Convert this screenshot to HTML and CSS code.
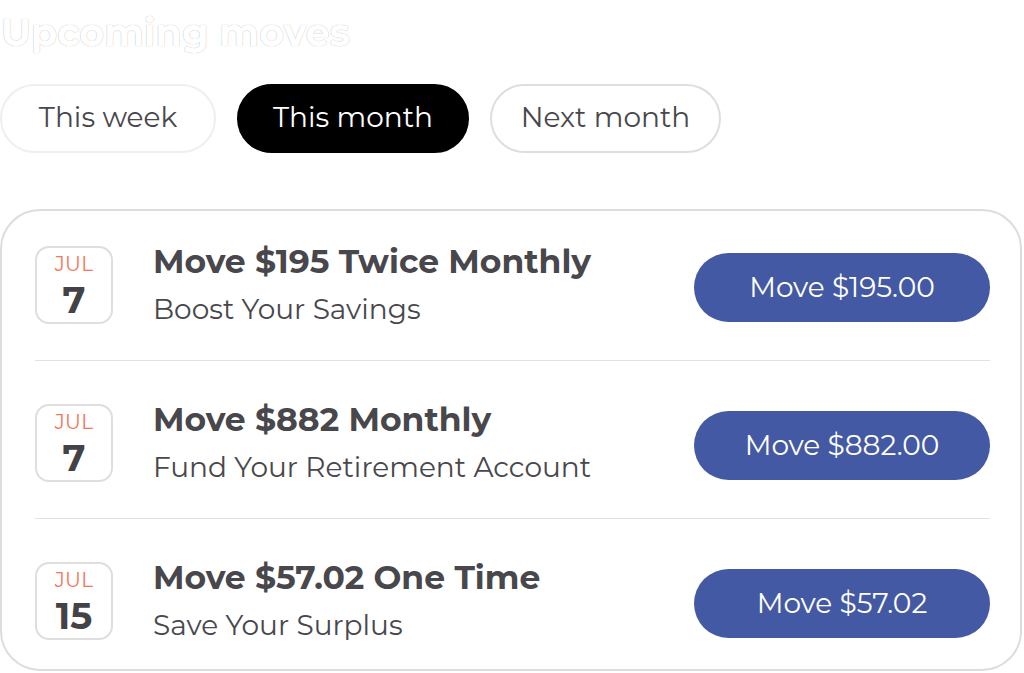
FILE: index.html
```html
<!DOCTYPE html>
<html>
<head>
<meta charset="utf-8">
<link rel="stylesheet" href="styles.css">
</head>
<body>
<div class="page">
  <h1 class="title">Upcoming moves</h1>
  <div class="tabs">
    <button class="tab tab-week">This week</button>
    <button class="tab tab-active">This month</button>
    <button class="tab tab-next">Next month</button>
  </div>
  <div class="card">
    <div class="row">
      <div class="date"><span class="month">JUL</span><span class="day">7</span></div>
      <div class="info">
        <div class="info-title">Move $195 Twice Monthly</div>
        <div class="info-sub">Boost Your Savings</div>
      </div>
      <button class="move">Move $195.00</button>
    </div>
    <div class="row">
      <div class="date"><span class="month">JUL</span><span class="day">7</span></div>
      <div class="info">
        <div class="info-title">Move $882 Monthly</div>
        <div class="info-sub">Fund Your Retirement Account</div>
      </div>
      <button class="move">Move $882.00</button>
    </div>
    <div class="row">
      <div class="date"><span class="month">JUL</span><span class="day">15</span></div>
      <div class="info">
        <div class="info-title">Move $57.02 One Time</div>
        <div class="info-sub">Save Your Surplus</div>
      </div>
      <button class="move">Move $57.02</button>
    </div>
  </div>
</div>
</body>
</html>
```
FILE: styles.css
```css
* { box-sizing: border-box; }
html, body {
  margin: 0;
  background: #ffffff;
}
body {
  font-family: Montserrat, "Open Sans", "Noto Sans", sans-serif;
  color: #48484c;
  width: 1024px;
  height: 673px;
  overflow: hidden;
}
.title {
  margin: 0;
  padding: 11px 0 0 1px;
  height: 84px;
  font-size: 38px;
  line-height: 44px;
  font-weight: 700;
  color: #ffffff;
  text-shadow: 0 0 1px rgba(0,0,0,0.35);
}
.tabs {
  display: flex;
  gap: 21px;
  height: 69px;
}
.tab {
  font-family: inherit;
  height: 69px;
  border-radius: 35px;
  border: 2px solid #e6e6e6;
  background: #ffffff;
  color: #48484c;
  font-size: 28px;
  padding: 0 0 4px;
  text-align: center;
}
.tab-week { width: 216px; border-color: #efefef; }
.tab-active {
  width: 232px;
  background: #000000;
  border-color: #000000;
  color: #ffffff;
}
.tab-next { width: 231px; border-color: #dedede; }
.card {
  margin-top: 56px;
  width: 1022px;
  border: 2px solid #dddddd;
  border-radius: 40px;
  padding: 0 30px 0 33px;
}
.row {
  display: flex;
  align-items: center;
  padding: 43px 0 36px;
  border-bottom: 1px solid #e2e2e2;
}
.row:first-child { padding-top: 35px; }
.row:last-child { border-bottom: none; padding-bottom: 29px; }
.date {
  width: 78px;
  height: 78px;
  border: 2px solid #dedede;
  border-radius: 14px;
  display: flex;
  flex-direction: column;
  align-items: center;
  justify-content: center;
  flex-shrink: 0;
  padding-top: 3px;
}
.month {
  font-size: 20px;
  line-height: 25px;
  color: #f4765d;
  letter-spacing: 0.3px;
}
.day {
  font-size: 37px;
  line-height: 45px;
  font-weight: 700;
  color: #434247;
}
.info {
  flex: 1;
  margin-left: 40px;
}
.info-title {
  font-size: 33px;
  line-height: 30px;
  font-weight: 700;
  color: #48474c;
}
.info-sub {
  margin-top: 18px;
  font-size: 28px;
  line-height: 30px;
  color: #48484c;
}
.move {
  font-family: inherit;
  width: 296px;
  height: 69px;
  margin-top: 4px;
  border: none;
  border-radius: 35px;
  background: #4459a3;
  color: #ffffff;
  font-size: 28px;
  padding: 0;
  flex-shrink: 0;
}
```
